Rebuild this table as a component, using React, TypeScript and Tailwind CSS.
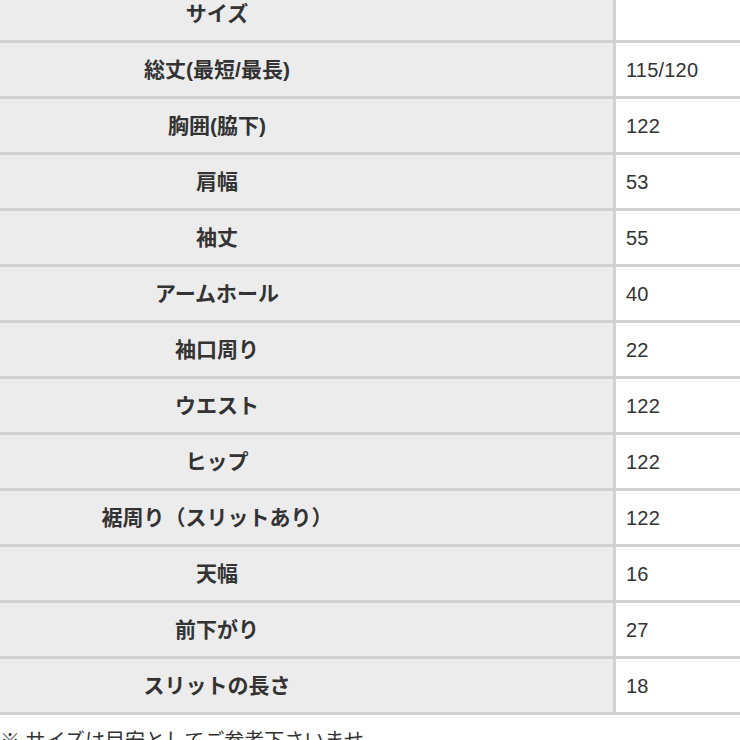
import React from 'react';

interface SizeRow {
    label: string;
    value: string;
}

const rows: SizeRow[] = [
    { label: 'サイズ', value: '' },
    { label: '総丈(最短/最長)', value: '115/120' },
    { label: '胸囲(脇下)', value: '122' },
    { label: '肩幅', value: '53' },
    { label: '袖丈', value: '55' },
    { label: 'アームホール', value: '40' },
    { label: '袖口周り', value: '22' },
    { label: 'ウエスト', value: '122' },
    { label: 'ヒップ', value: '122' },
    { label: '裾周り（スリットあり）', value: '122' },
    { label: '天幅', value: '16' },
    { label: '前下がり', value: '27' },
    { label: 'スリットの長さ', value: '18' },
];

const App: React.FC = () => {
    return (
        <div
            className="w-[740px] h-[740px] overflow-hidden bg-white text-[#333]"
            style={{ fontFamily: '"Liberation Sans", "Noto Sans CJK JP", sans-serif' }}
        >
            {/* the table is cropped on the left and top in the screenshot */}
            <div className="-ml-[179px] -mt-[13px] w-[919px]">
                {rows.map(row => (
                    <div key={row.label} className="flex h-[56px] border-b-[3px] border-[#d2d2d2]">
                        <div className="w-[795px] shrink-0 flex items-center justify-center bg-[#ececec] border-r-[3px] border-[#d2d2d2] font-bold text-[21px]">
                            {row.label}
                        </div>
                        <div className="flex-1 flex items-center pl-[10px] text-[20px] tracking-[0.2px]">
                            {row.value}
                        </div>
                    </div>
                ))}
            </div>
            <p className="mt-[12px] text-[20px] leading-[28px] whitespace-nowrap">
                ※ サイズは目安としてご参考下さいませ。
            </p>
        </div>
    );
};

export default App;
